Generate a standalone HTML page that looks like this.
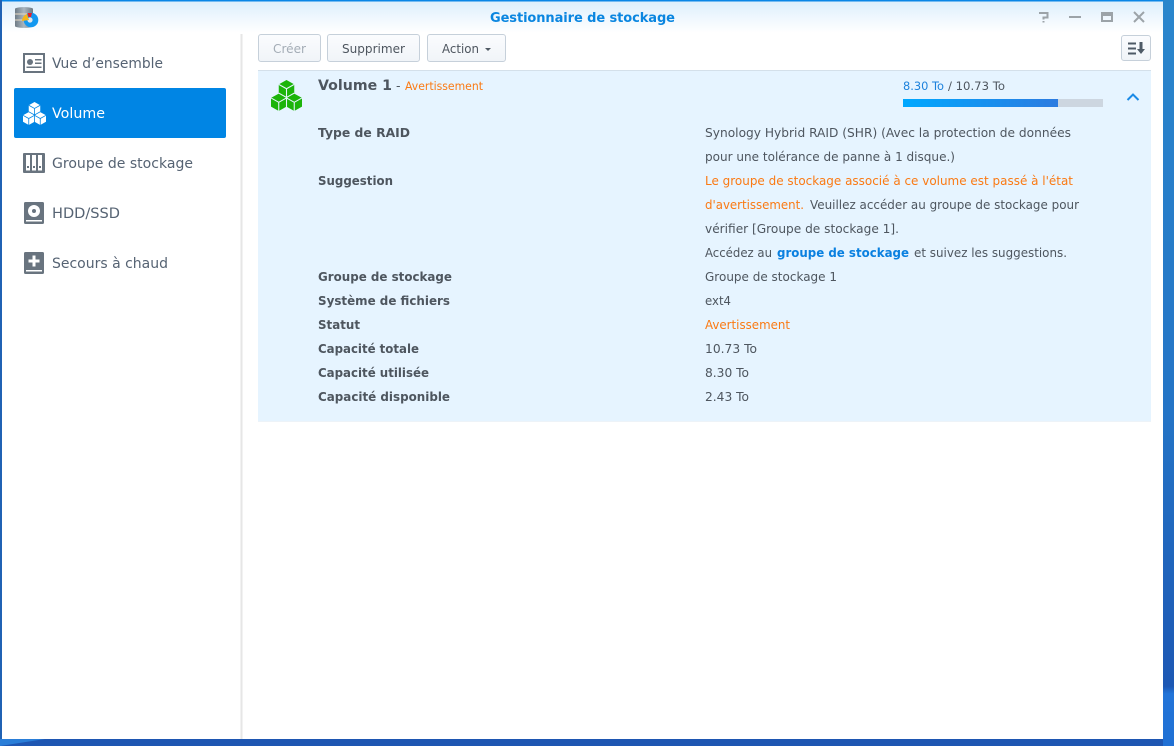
<!DOCTYPE html>
<html><head><meta charset="utf-8"><title>Gestionnaire de stockage</title>
<style>
html,body{margin:0;padding:0;width:1174px;height:746px;overflow:hidden;background:#2068bb}
svg{display:block}
text{font-family:"DejaVu Sans","Liberation Sans",sans-serif;font-size:12.5px;fill:#4e565f;white-space:pre}
.b{font-weight:bold}
.s{font-size:14px;fill:#566373}
.o{fill:#fa7a14}
.g{fill:#fff}
</style></head><body>
<svg width="1174" height="746" viewBox="0 0 1174 746" xmlns="http://www.w3.org/2000/svg">
<defs>
<linearGradient id="rt" x1="0" y1="0" x2="0" y2="1"><stop offset="0" stop-color="#2a86cc"/><stop offset=".55" stop-color="#2474c6"/><stop offset=".92" stop-color="#1d58b4"/><stop offset=".93" stop-color="#2274d8"/><stop offset="1" stop-color="#2070d4"/></linearGradient>
<linearGradient id="tb" x1="0" y1="0" x2="0" y2="1"><stop offset="0" stop-color="#dcEEfc"/><stop offset="1" stop-color="#ffffff"/></linearGradient>
<linearGradient id="bar" x1="0" y1="0" x2="1" y2="0"><stop offset="0" stop-color="#00a8ff"/><stop offset="1" stop-color="#2c7be0"/></linearGradient>
<linearGradient id="btn" x1="0" y1="0" x2="0" y2="1"><stop offset="0" stop-color="#fbfcfe"/><stop offset="1" stop-color="#f0f4f8"/></linearGradient>
<linearGradient id="cyl" x1="0" y1="0" x2="1" y2="0"><stop offset="0" stop-color="#6f7c86"/><stop offset=".5" stop-color="#a9b6c0"/><stop offset="1" stop-color="#6d7a84"/></linearGradient>
<symbol id="cubes" viewBox="0 0 32 32">
<path d="M16 0l8 4.500v9L16 18l-8-4.500v-9zM8 14l8 4.500v9L8 32l-8-4.500v-9zM24 14l8 4.500v9L24 32l-8-4.500v-9z" fill="currentColor"/>
<path d="M8 4.500L16 9l8-4.500M16 9v9M0 18.500L8 23l8-4.500M8 23v9M16 18.500L24 23l8-4.500M24 23v9M8 13.500L16 18l8-4.500M16 18v14" fill="none" stroke="var(--c)" stroke-width="1.100"/>
</symbol>
</defs>

<rect width="1174" height="746" fill="#1e56b2"/>
<rect x="1163" width="11" height="746" fill="url(#rt)"/>
<rect width="2" height="746" fill="#2062b4"/>
<path d="M0 739H45L0 746Z" fill="#2a7ed8"/>

<rect x="2" y="0" width="1161" height="739" fill="#fff"/>
<rect x="2" y="0" width="1161" height="33" fill="url(#tb)"/>
<rect x="2" y="0" width="1161" height="1.500" fill="#0a86e6"/>
<rect x="240.500" y="34" width="2" height="705" fill="#e6e6e6"/>

<!-- app icon -->
<path d="M15 9c0-2.500 18-2.500 18 0v17c0 2.500-18 2.500-18 0z" fill="url(#cyl)"/>
<path d="M15 14h18M15 20h18" stroke="#e8d9c2" stroke-width="1"/>
<circle cx="31" cy="20" r="7.300" fill="#1298f0"/>
<circle cx="30" cy="20" r="2.600" fill="#dfe6ec"/>
<path d="M22 21c0-3 2-6 5-7l2 6z" fill="#f3b51c"/>
<path d="M27.500 13h4.500l-1 4h-2.500z" fill="#e5222a"/>

<text class="b" x="490" y="22" style="font-size:13px;fill:#0a86e0" textLength="185" lengthAdjust="spacing">Gestionnaire de stockage</text>

<!-- window controls -->
<g fill="none" stroke="#9ca3a8" stroke-width="2">
<path d="M1039 13h8.500v4.500h-4v2"/>
<path d="M1069 17h12"/>
<path d="M1102 13h10v8h-10z"/><path d="M1102 14.500h10" stroke-width="3"/>
<path d="M1134 12l10 10M1144 12l-10 10"/>
</g>
<rect x="1042.500" y="21" width="2" height="1.500" fill="#9ca3a8"/>

<!-- sidebar -->
<rect x="14" y="88" width="212" height="50" rx="2" fill="#0085e4"/>
<g>
<rect x="23" y="53" width="22" height="20" fill="#69747f"/>
<rect x="25" y="55" width="18" height="16" fill="#fff"/>
<circle cx="30" cy="62" r="3" fill="#69747f"/>
<path d="M35 59h6.500v1.500H35zM35 62.500h6.500V64H35zM26.500 66.500h15V68h-15z" fill="#69747f"/>
<svg x="23" y="102" width="23" height="23" style="color:#fff;--c:#0085e4"><use href="#cubes"/></svg>
<rect x="23" y="153" width="22" height="20" rx="1" fill="#69747f"/>
<path d="M26 155h4v15.500h-4zM32 155h4v15.500h-4zM38 155h4v15.500h-4z" fill="#fff"/>
<path d="M27 166h2v2h-2zM33 166h2v2h-2zM39 166h2v2h-2z" fill="#69747f"/>
<rect x="24" y="202" width="20" height="22" rx="1.500" fill="#69747f"/>
<circle cx="34" cy="211" r="6" fill="#fff"/><circle cx="34" cy="211" r="2" fill="#69747f"/>
<rect x="26" y="220" width="16" height="1.500" fill="#fff"/>
<rect x="24" y="252" width="20" height="22" rx="1.500" fill="#69747f"/>
<path d="M32.500 255.500h3v4h4v3h-4v4h-3v-4h-4v-3h4z" fill="#fff"/>
<rect x="26" y="270" width="16" height="1.500" fill="#fff"/>
</g>
<text class="s" x="52" y="68" textLength="111" lengthAdjust="spacingAndGlyphs">Vue d’ensemble</text>
<text class="s g" x="52" y="118" textLength="53" lengthAdjust="spacingAndGlyphs">Volume</text>
<text class="s" x="52" y="168" textLength="141" lengthAdjust="spacingAndGlyphs">Groupe de stockage</text>
<text class="s" x="52" y="218" textLength="68" lengthAdjust="spacingAndGlyphs">HDD/SSD</text>
<text class="s" x="52" y="268" textLength="116" lengthAdjust="spacingAndGlyphs">Secours à chaud</text>

<!-- toolbar -->
<g fill="url(#btn)" stroke="#c6d0da">
<rect x="258.500" y="34.500" width="62" height="27" rx="2.500"/>
<rect x="327.500" y="34.500" width="92" height="27" rx="2.500"/>
<rect x="427.500" y="34.500" width="78" height="27" rx="2.500"/>
<rect x="1121.500" y="35.500" width="29" height="25" rx="2.500"/>
</g>
<text x="273" y="53" style="fill:#a4adb6" textLength="33" lengthAdjust="spacingAndGlyphs">Créer</text>
<text x="342" y="53" textLength="63" lengthAdjust="spacingAndGlyphs">Supprimer</text>
<text x="442" y="53" textLength="37" lengthAdjust="spacingAndGlyphs">Action</text>
<path d="M485 48h6l-3 3z" fill="#505a64"/>
<path d="M1128 43.500h8M1128 48.500h8M1128 53.500h8" stroke="#4e5a66" stroke-width="2"/>
<path d="M1139.500 42h3v7h2.500l-4 5-4-5h2.500z" fill="#4e5a66"/>

<!-- panel -->
<rect x="258" y="70" width="893" height="352" fill="#e6f4ff"/>
<rect x="258" y="70" width="893" height="1" fill="#d4e0ea"/>
<rect x="258" y="421" width="893" height="1" fill="#edf3f8"/>
<svg x="271" y="80" width="31" height="31" style="color:#1cb40a;--c:#e6f4ff"><use href="#cubes"/></svg>

<text class="b" x="318" y="90" style="font-size:14.500px" textLength="74" lengthAdjust="spacingAndGlyphs">Volume 1</text>
<text x="396" y="90" textLength="5" lengthAdjust="spacing">-</text>
<text class="o" x="405" y="90" style="font-size:11.500px" textLength="78" lengthAdjust="spacingAndGlyphs">Avertissement</text>
<text x="903" y="90" style="font-size:11.500px;fill:#1d82dc" textLength="41" lengthAdjust="spacingAndGlyphs">8.30 To</text>
<text x="948" y="90" style="font-size:11.500px" textLength="57" lengthAdjust="spacingAndGlyphs">/ 10.73 To</text>
<rect x="903" y="99" width="200" height="8" fill="#cdd6e0"/>
<rect x="903" y="99" width="155" height="8" fill="url(#bar)"/>
<path d="M1127.500 100l5.500-5.500 5.500 5.500" fill="none" stroke="#1a8ae6" stroke-width="2"/>

<text class="b" x="318" y="137" textLength="92" lengthAdjust="spacingAndGlyphs">Type de RAID</text>
<text class="b" x="318" y="185" textLength="75" lengthAdjust="spacingAndGlyphs">Suggestion</text>
<text class="b" x="318" y="281" textLength="134" lengthAdjust="spacingAndGlyphs">Groupe de stockage</text>
<text class="b" x="318" y="305" textLength="132" lengthAdjust="spacingAndGlyphs">Système de fichiers</text>
<text class="b" x="318" y="329" textLength="42" lengthAdjust="spacingAndGlyphs">Statut</text>
<text class="b" x="318" y="353" textLength="101" lengthAdjust="spacingAndGlyphs">Capacité totale</text>
<text class="b" x="318" y="377" textLength="111" lengthAdjust="spacingAndGlyphs">Capacité utilisée</text>
<text class="b" x="318" y="401" textLength="132" lengthAdjust="spacingAndGlyphs">Capacité disponible</text>

<text x="705" y="137" textLength="366" lengthAdjust="spacingAndGlyphs">Synology Hybrid RAID (SHR) (Avec la protection de données</text>
<text x="705" y="161" textLength="250" lengthAdjust="spacingAndGlyphs">pour une tolérance de panne à 1 disque.)</text>
<text class="o" x="705" y="185" textLength="368" lengthAdjust="spacingAndGlyphs">Le groupe de stockage associé à ce volume est passé à l'état</text>
<text class="o" x="705" y="209" textLength="99" lengthAdjust="spacingAndGlyphs">d'avertissement.</text>
<text x="810" y="209" textLength="269" lengthAdjust="spacingAndGlyphs">Veuillez accéder au groupe de stockage pour</text>
<text x="705" y="233" textLength="194" lengthAdjust="spacingAndGlyphs">vérifier [Groupe de stockage 1].</text>
<text x="705" y="257" textLength="67" lengthAdjust="spacingAndGlyphs">Accédez au</text>
<text class="b" x="777" y="257" style="fill:#0a80e0" textLength="132" lengthAdjust="spacingAndGlyphs">groupe de stockage</text>
<text x="914" y="257" textLength="153" lengthAdjust="spacingAndGlyphs">et suivez les suggestions.</text>
<text x="705" y="281" textLength="132" lengthAdjust="spacingAndGlyphs">Groupe de stockage 1</text>
<text x="705" y="305" textLength="26" lengthAdjust="spacingAndGlyphs">ext4</text>
<text class="o" x="705" y="329" textLength="85" lengthAdjust="spacingAndGlyphs">Avertissement</text>
<text x="705" y="353" textLength="52" lengthAdjust="spacingAndGlyphs">10.73 To</text>
<text x="705" y="377" textLength="44" lengthAdjust="spacingAndGlyphs">8.30 To</text>
<text x="705" y="401" textLength="44" lengthAdjust="spacingAndGlyphs">2.43 To</text>
</svg>
</body></html>
